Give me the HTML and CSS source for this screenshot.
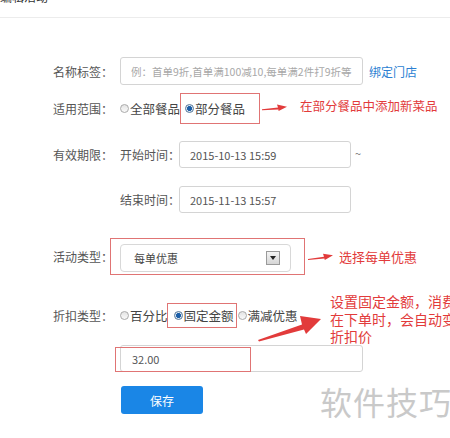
FILE: index.html
```html
<!DOCTYPE html>
<html lang="zh-CN">
<head>
    <meta charset="UTF-8">
    <meta name="viewport" content="width=device-width, initial-scale=1.0">
    <title>编辑活动</title>
    <link rel="stylesheet" href="styles.css">
</head>
<body>
<div class="page">
    <div class="topbar"><span class="topbar-title">编辑活动</span></div>

    <div class="form">
        <div class="row row-name">
            <span class="label">名称标签：</span>
            <input class="field field-name" type="text" placeholder="例：首单9折,首单满100减10,每单满2件打9折等">
            <a class="link" href="#">绑定门店</a>
        </div>

        <div class="row row-scope">
            <span class="label">适用范围：</span>
            <span class="radio"><i class="radio-dot"></i>全部餐品</span>
            <span class="mark mark-scope">
                <span class="radio"><i class="radio-dot checked"></i>部分餐品</span>
            </span>
            <svg class="arrow-sm" width="26" height="10" viewBox="0 0 26 10">
                <polygon points="0,6.2 16,4.6 15,1.6 25,3.8 16.6,8 16.4,6.4 0,7.2" fill="#e23b3b"/>
            </svg>
            <span class="note note-scope">在部分餐品中添加新菜品</span>
        </div>

        <div class="row row-start">
            <span class="label">有效期限：</span>
            <span class="sublabel">开始时间：</span>
            <input class="field field-date" type="text" value="2015-10-13 15:59">
            <span class="tilde">~</span>
        </div>

        <div class="row row-end">
            <span class="label"></span>
            <span class="sublabel">结束时间：</span>
            <input class="field field-date" type="text" value="2015-11-13 15:57">
        </div>

        <div class="row row-type">
            <span class="label">活动类型：</span>
            <span class="mark mark-type">
                <span class="select">
                    <span class="select-text">每单优惠</span>
                    <span class="select-btn">
                        <svg width="6" height="4" viewBox="0 0 6 4"><polygon points="0,0 6,0 3,4" fill="#222"/></svg>
                    </span>
                </span>
            </span>
            <svg class="arrow-sm arrow-type" width="26" height="10" viewBox="0 0 26 10">
                <polygon points="0,7 16,4.8 15,1.8 25,3.2 16.8,8 16.4,6.6 0,8" fill="#e23b3b"/>
            </svg>
            <span class="note note-type">选择每单优惠</span>
        </div>

        <div class="row row-discount">
            <span class="label">折扣类型：</span>
            <span class="radio"><i class="radio-dot"></i>百分比</span>
            <span class="mark mark-discount">
                <span class="radio"><i class="radio-dot checked"></i>固定金额</span>
            </span>
            <span class="radio radio-last"><i class="radio-dot"></i>满减优惠</span>
        </div>

        <div class="row row-amount">
            <span class="label"></span>
            <div class="amount">
                <input class="field field-amount" type="text" value="32.00">
                <span class="amount-mark"></span>
            </div>
        </div>

        <div class="row row-save">
            <span class="label"></span>
            <button class="btn-save" type="button">保存</button>
        </div>

        <svg class="arrow-big" width="80" height="40" viewBox="0 0 80 40">
            <polygon points="8,30 52,14.5 50,6 71,9 56,24 54,19.5 9,31.5" fill="#e23b3b"/>
        </svg>
        <div class="note note-discount">设置固定金额，消费者<br>在下单时，会自动变成<br>折扣价</div>
    </div>

    <div class="watermark">软件技巧</div>
</div>
</body>
</html>
```

FILE: styles.css
```css
* {
    box-sizing: border-box;
}
body {
    margin: 0;
    width: 450px;
    height: 438px;
    overflow: hidden;
    background: #fff;
    color: #555;
    font-family: "Noto Sans CJK SC", "Liberation Sans", sans-serif;
}
.page {
    position: relative;
    height: 438px;
    overflow: hidden;
}
.topbar {
    height: 18px;
    border-bottom: 1px solid #ececec;
    overflow: hidden;
}
.topbar-title {
    display: block;
    margin-top: -9px;
    font-size: 12px;
    line-height: 12px;
    color: #333;
}
.form {
    position: relative;
    padding-top: 39px;
    padding-left: 53px;
}
.row {
    display: flex;
    align-items: center;
}
.label {
    width: 67px;
    flex-shrink: 0;
    font-size: 12px;
    color: #555;
    white-space: nowrap;
}
.sublabel {
    width: 59px;
    flex-shrink: 0;
    font-size: 12px;
    color: #555;
    white-space: nowrap;
}
.field {
    height: 28px;
    border: 1px solid #d4d4d4;
    border-radius: 3px;
    padding: 0 10px;
    font-family: inherit;
    font-size: 11px;
    color: #555;
    outline: none;
    background: #fff;
}
.field::placeholder {
    color: #a8a8a8;
}
.row-name {
    height: 28px;
}
.field-name {
    width: 243px;
    font-size: 10.5px;
}
.link {
    margin-left: 6px;
    font-size: 12px;
    color: #2c7fd2;
    text-decoration: none;
}
.radio {
    display: inline-flex;
    align-items: center;
    font-size: 12.5px;
    color: #444;
    white-space: nowrap;
}
.radio-dot {
    width: 9px;
    height: 9px;
    margin-right: 1px;
    border-radius: 50%;
    border: 1px solid #aaa;
    background: linear-gradient(#e4e4e4, #fafafa);
}
.radio-dot.checked {
    border-color: #557799;
    background: radial-gradient(circle, #1b5ea8 0, #1b5ea8 2.2px, #dde7f1 2.8px);
}
.mark {
    display: inline-flex;
    align-items: center;
    border: 1px solid #e07474;
}
.row-scope {
    margin-top: 8px;
    height: 31px;
}
.mark-scope {
    height: 31px;
    padding: 0 14px 0 4px;
}
.arrow-sm {
    margin-left: 2px;
    margin-top: -2px;
}
.note {
    color: #e23b3b;
    white-space: nowrap;
}
.note-scope {
    margin-left: 12px;
    margin-top: -7px;
    font-size: 12.5px;
}
.row-start {
    margin-top: 17px;
    height: 27px;
}
.row-end {
    margin-top: 18px;
    height: 27px;
}
.field-date {
    width: 172px;
    height: 27px;
}
.tilde {
    margin-left: 4px;
    margin-top: -4px;
    font-size: 11px;
    color: #777;
}
.row-type {
    margin-top: 25px;
    height: 37px;
}
.mark-type {
    height: 37px;
    margin-left: -10px;
    padding: 3px 13px 0 9px;
}
.select {
    display: flex;
    align-items: center;
    justify-content: space-between;
    width: 171px;
    height: 28px;
    padding: 0 10px 0 13px;
    border: 1px solid #d8d8d8;
    border-radius: 4px;
    background: #fff;
}
.select-text {
    font-size: 11px;
    color: #444;
}
.select-btn {
    display: flex;
    align-items: center;
    justify-content: center;
    width: 14px;
    height: 14px;
    border: 1px solid #9a9a9a;
    background: linear-gradient(#f4f4f4, #d6d6d6);
}
.arrow-type {
    margin-left: 3px;
    margin-top: 0;
}
.note-type {
    margin-left: 5px;
    font-size: 13px;
}
.row-discount {
    margin-top: 28px;
    height: 25px;
}
.mark-discount {
    height: 25px;
    margin-left: -1px;
    padding: 0 2px 0 6px;
}
.radio-last {
    margin-left: 1px;
}
.row-amount {
    margin-top: 17px;
    height: 27px;
}
.amount {
    position: relative;
}
.field-amount {
    width: 243px;
    height: 27px;
    padding-left: 11px;
    font-size: 11px;
}
.amount-mark {
    position: absolute;
    left: -5px;
    top: 2px;
    width: 136px;
    height: 25px;
    border: 1px solid #e07474;
}
.row-save {
    margin-top: 14px;
}
.btn-save {
    width: 82px;
    height: 28px;
    margin-left: 1px;
    border: none;
    border-radius: 3px;
    background: #1a86e6;
    color: #fff;
    font-family: inherit;
    font-size: 12px;
    cursor: pointer;
}
.arrow-big {
    position: absolute;
    left: 250px;
    top: 292px;
}
.note-discount {
    position: absolute;
    left: 330px;
    right: 0;
    top: 275px;
    overflow: hidden;
    font-size: 14px;
    line-height: 17.5px;
}
.watermark {
    position: absolute;
    left: 320px;
    top: 381px;
    font-size: 32px;
    line-height: 40px;
    letter-spacing: 1px;
    color: #c9c9c9;
    white-space: nowrap;
}
```
